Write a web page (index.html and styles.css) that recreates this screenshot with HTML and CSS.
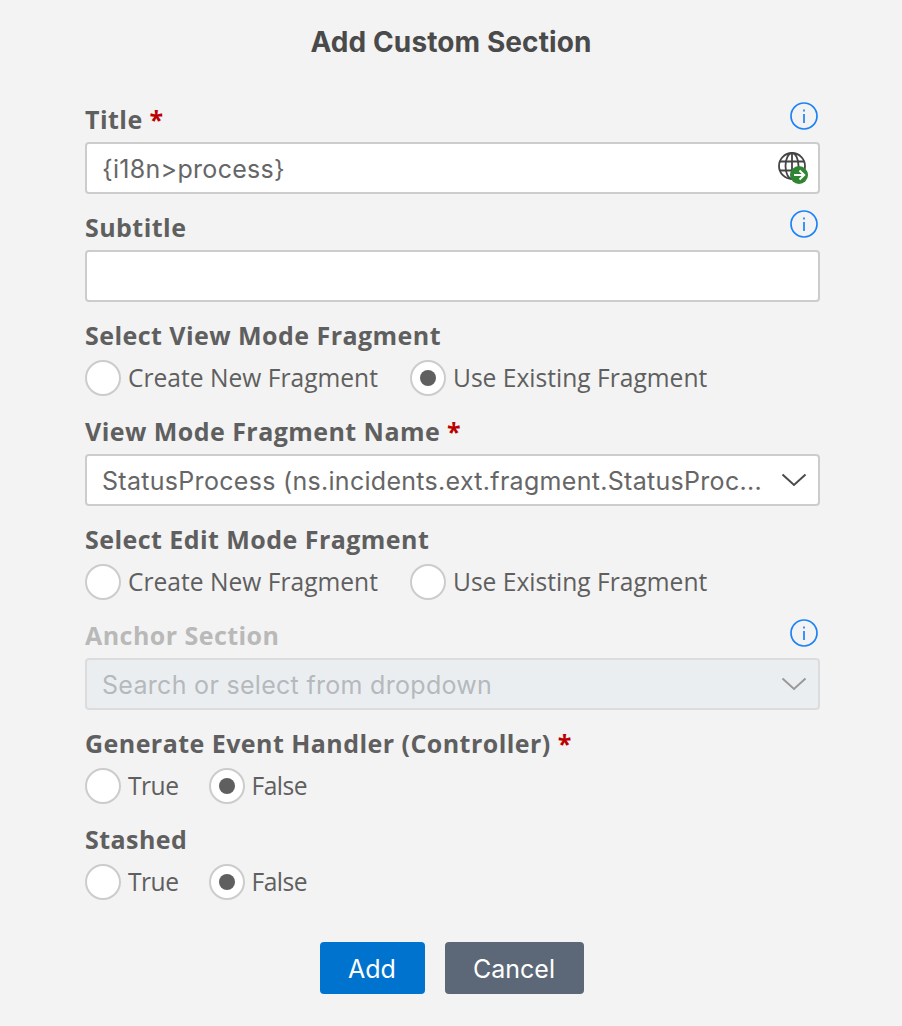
FILE: index.html
```html
<!DOCTYPE html>
<html lang="en">
<head>
    <meta charset="UTF-8">
    <meta name="viewport" content="width=device-width, initial-scale=1.0">
    <title>Add Custom Section</title>
    <link rel="stylesheet" href="styles.css">
</head>
<body>
    <h1 class="heading">Add Custom Section</h1>

    <form class="form">
        <div class="field">
            <div class="label-row">
                <label class="label">Title <span class="req">*</span></label>
                <svg class="info" viewBox="0 0 28 28"><circle cx="14" cy="14" r="13" /><path d="M14 12v9M14 7.5v2" /></svg>
            </div>
            <div class="input">
                <span class="value">{i18n&gt;process}</span>
                <svg class="globe" viewBox="0 0 32 32">
                    <g class="globe-lines">
                        <circle cx="15" cy="14" r="13" />
                        <ellipse cx="15" cy="14" rx="6.500" ry="13" />
                        <path d="M3 9.500h24M3 18.500h24M15 1v26" />
                    </g>
                    <circle class="globe-badge" cx="22" cy="23" r="9" />
                    <path class="globe-arrow" d="M17 23h10M22.500 18.500l4.700 4.500-4.700 4.500" />
                </svg>
            </div>
        </div>

        <div class="field">
            <div class="label-row">
                <label class="label">Subtitle</label>
                <svg class="info" viewBox="0 0 28 28"><circle cx="14" cy="14" r="13" /><path d="M14 12v9M14 7.5v2" /></svg>
            </div>
            <div class="input"></div>
        </div>

        <div class="field">
            <label class="label">Select View Mode Fragment</label>
            <div class="radios">
                <span class="radio"><i class="circle"></i>Create New Fragment</span>
                <span class="radio"><i class="circle on"></i>Use Existing Fragment</span>
            </div>
        </div>

        <div class="field">
            <label class="label">View Mode Fragment Name <span class="req">*</span></label>
            <div class="input">
                <span class="value">StatusProcess (ns.incidents.ext.fragment.StatusProc...</span>
                <svg class="chevron" viewBox="0 0 26 14"><path d="M1.500 1.500L13 12 24.500 1.500" /></svg>
            </div>
        </div>

        <div class="field">
            <label class="label">Select Edit Mode Fragment</label>
            <div class="radios">
                <span class="radio"><i class="circle"></i>Create New Fragment</span>
                <span class="radio"><i class="circle"></i>Use Existing Fragment</span>
            </div>
        </div>

        <div class="field disabled">
            <div class="label-row">
                <label class="label">Anchor Section</label>
                <svg class="info" viewBox="0 0 28 28"><circle cx="14" cy="14" r="13" /><path d="M14 12v9M14 7.5v2" /></svg>
            </div>
            <div class="input">
                <span class="value">Search or select from dropdown</span>
                <svg class="chevron" viewBox="0 0 26 14"><path d="M1.500 1.500L13 12 24.500 1.500" /></svg>
            </div>
        </div>

        <div class="field">
            <label class="label">Generate Event Handler (Controller) <span class="req">*</span></label>
            <div class="radios radios-short">
                <span class="radio"><i class="circle"></i>True</span>
                <span class="radio"><i class="circle on"></i>False</span>
            </div>
        </div>

        <div class="field">
            <label class="label">Stashed</label>
            <div class="radios radios-short">
                <span class="radio"><i class="circle"></i>True</span>
                <span class="radio"><i class="circle on"></i>False</span>
            </div>
        </div>

        <div class="buttons">
            <button type="button" class="btn btn-add">Add</button>
            <button type="button" class="btn btn-cancel">Cancel</button>
        </div>
    </form>
</body>
</html>
```

FILE: styles.css
```css
* {
    box-sizing: border-box;
}
body {
    margin: 0;
    height: 1026px;
    overflow: hidden;
    background-color: #f3f3f3;
    color: #5f5f5f;
    font-family: "Open Sans", "Noto Sans", sans-serif;
}
.heading {
    margin: 0;
    padding-top: 25px;
    height: 106px;
    text-align: center;
    font-family: Inter, sans-serif;
    font-size: 28px;
    line-height: 34px;
    letter-spacing: 0.1px;
    font-weight: 700;
    color: #4a4a4a;
}
.form {
    padding: 0 82px 0 85px;
}
.field {
    margin-bottom: 20px;
}
.label-row {
    display: flex;
    justify-content: space-between;
    padding-right: 2px;
}
.label {
    display: block;
    height: 28px;
    margin-bottom: 8px;
    font-size: 25px;
    line-height: 27px;
    letter-spacing: 0.45px;
    font-weight: 700;
}
.req {
    color: #b00;
}
.info {
    width: 28px;
    height: 28px;
    margin-top: -4px;
    fill: none;
    stroke: #1a82f7;
    stroke-width: 1.700;
}
.input {
    display: flex;
    align-items: center;
    justify-content: space-between;
    height: 52px;
    padding: 0 20px 0 15px;
    background-color: #fff;
    border: 2px solid #ccc;
    border-radius: 4px;
    font-family: Inter, sans-serif;
    font-size: 25px;
    letter-spacing: 0.3px;
    color: #666;
}
.value {
    padding-top: 2px;
    white-space: nowrap;
}
.globe {
    width: 32px;
    height: 32px;
    margin-right: -11px;
}
.globe-lines {
    fill: none;
    stroke: #444;
    stroke-width: 1.800;
}
.globe-badge {
    fill: #2f8532;
}
.globe-arrow {
    fill: none;
    stroke: #fff;
    stroke-width: 2;
}
.chevron {
    width: 26px;
    height: 14px;
    margin-right: -9px;
    fill: none;
    stroke: #4a4a4a;
    stroke-width: 2;
}
.disabled .label {
    color: #b9b9b9;
}
.disabled .info {
    margin-top: -3px;
}
.disabled .input {
    background-color: #ebeef1;
    border-color: #dcdcdc;
    color: #b5b9bd;
}
.disabled .chevron {
    stroke: #999;
}
.radios {
    display: flex;
    gap: 32px;
    height: 40px;
    align-items: center;
    font-size: 24.6px;
    line-height: 34px;
}
.radios-short {
    gap: 30px;
    letter-spacing: -0.5px;
}
.radio {
    display: flex;
    align-items: center;
    gap: 7px;
}
.circle {
    display: flex;
    align-items: center;
    justify-content: center;
    width: 36px;
    height: 36px;
    background-color: #fff;
    border: 2px solid #ccc;
    border-radius: 50%;
}
.circle.on::after {
    content: "";
    width: 16px;
    height: 16px;
    background-color: #5f5f5f;
    border-radius: 50%;
}
.buttons {
    display: flex;
    justify-content: center;
    gap: 20px;
    margin-top: 40px;
    padding-right: 2px;
}
.btn {
    height: 52px;
    padding: 2px 0 0;
    border: 0;
    border-radius: 4px;
    color: #fff;
    font-family: Inter, sans-serif;
    font-size: 25px;
}
.btn-add {
    width: 105px;
    background-color: #0073cf;
}
.btn-cancel {
    width: 139px;
    background-color: #5c6878;
}
```
